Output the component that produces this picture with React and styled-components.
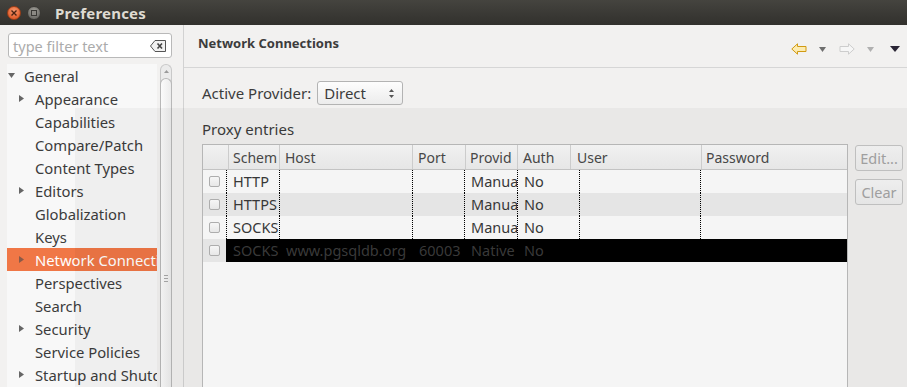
import React from "react";
import styled, { createGlobalStyle } from "styled-components";

const GlobalStyle = createGlobalStyle`
    html, body {
        margin: 0;
        padding: 0;
        background: #f2f1f0;
    }
`;

const Window = styled.div`
    position: relative;
    width: 907px;
    height: 387px;
    display: flex;
    flex-direction: column;
    overflow: hidden;
    background: #f2f1f0;
    font-family: "Noto Sans", "Open Sans", sans-serif;
    color: #3c3c3c;
`;

const TitleBar = styled.div`
    height: 25px;
    flex: none;
    display: flex;
    align-items: center;
    padding-left: 7px;
    background: linear-gradient(#45443f, #393834 60%, #32312d);
`;

const WindowButton = styled.div`
    width: 14px;
    height: 14px;
    border-radius: 50%;
    margin-right: 6px;
    display: flex;
    align-items: center;
    justify-content: center;
    box-sizing: border-box;
    ${props => props.close ? `
        background: radial-gradient(circle at 50% 35%, #f79a70, #e3602f 70%);
        border: 1px solid #9a3d17;
    ` : `
        background: radial-gradient(circle at 50% 35%, #a5a39c, #6f6e69 70%);
        border: 1px solid #3a3935;
    `}
`;

const TitleText = styled.div`
    margin-left: 8px;
    color: #dfdbd2;
    font-weight: bold;
    font-size: 15px;
    letter-spacing: 0.2px;
`;

const Body = styled.div`
    flex: 1;
    display: flex;
    min-height: 0;
`;

const LeftPanel = styled.div`
    width: 184px;
    flex: none;
    box-sizing: border-box;
    border-right: 1px solid #d2d2d2;
    padding: 8px 0 0 7px;
    display: flex;
    flex-direction: column;
`;

const FilterBox = styled.div`
    margin-left: 1px;
    width: 164px;
    height: 25px;
    box-sizing: border-box;
    border: 1px solid #b9b9b9;
    border-radius: 3px;
    background: #ffffff;
    display: flex;
    align-items: center;
    justify-content: space-between;
    padding: 0 5px 0 4px;
`;

const Placeholder = styled.span`
    color: #ababab;
    font-size: 14.5px;
`;

const TreeArea = styled.div`
    margin-top: 6px;
    flex: 1;
    display: flex;
    min-height: 0;
`;

const TreeList = styled.div`
    width: 150px;
    margin-right: 3px;
    background: #f8f8f8;
`;

const TreeRow = styled.div`
    height: 23px;
    display: flex;
    align-items: center;
    padding-left: ${props => props.depth * 11}px;
    white-space: nowrap;
    overflow: hidden;
    font-size: 14.8px;
    background: ${props => props.selected ? "#f07746" : "transparent"};
    color: ${props => props.selected ? "#ffffff" : "#3c3c3c"};
`;

const ArrowBox = styled.div`
    width: 17px;
    flex: none;
    display: flex;
    align-items: center;
    padding-left: 1px;
    box-sizing: border-box;
`;

const Scrollbar = styled.div`
    width: 12px;
    flex: none;
    box-sizing: border-box;
    border: 1px solid #c9c9c9;
    border-bottom: none;
    border-radius: 6px 6px 0 0;
    background: #ebebeb;
    display: flex;
    flex-direction: column;
    align-items: center;
    padding-top: 5px;
`;

const ScrollThumb = styled.div`
    margin-top: 5px;
    width: 12px;
    flex: 1;
    box-sizing: border-box;
    border: 1px solid #b8b8b8;
    border-bottom: none;
    border-radius: 6px 6px 0 0;
    background: linear-gradient(to right, #fbfbfb, #ececec);
    display: flex;
    justify-content: center;
`;

const Grip = styled.div`
    margin-top: 196px;
    width: 4px;
    height: 7px;
    background: repeating-linear-gradient(#a8a8a8 0 1px, transparent 1px 3px);
`;

const RightPanel = styled.div`
    flex: 1;
    display: flex;
    flex-direction: column;
    min-width: 0;
`;

const PageHeader = styled.div`
    height: 43px;
    flex: none;
    box-sizing: border-box;
    border-bottom: 1px solid #d6d6d6;
    display: flex;
    align-items: flex-start;
    justify-content: space-between;
    padding: 0 7px 0 14px;
`;

const PageTitle = styled.div`
    margin-top: 9px;
    line-height: 18px;
    font-weight: bold;
    font-size: 13px;
    color: #3c3c3c;
`;

const NavIcons = styled.div`
    margin-top: 17px;
    height: 14px;
    display: flex;
    align-items: center;
`;

const NavIcon = styled.div`
    display: flex;
    align-items: center;
    margin-left: ${props => props.gap || 0}px;
`;

const Content = styled.div`
    flex: 1;
    display: flex;
    flex-direction: column;
    padding: 13px 4px 0 18px;
    min-height: 0;
`;

const ProviderRow = styled.div`
    display: flex;
    align-items: center;
    gap: 6px;
    font-size: 15px;
`;

const Combo = styled.div`
    width: 86px;
    height: 24px;
    box-sizing: border-box;
    border: 1px solid #b3b3b3;
    border-radius: 3px;
    background: linear-gradient(#fdfdfd, #ececec);
    display: flex;
    align-items: center;
    justify-content: space-between;
    padding: 0 8px 0 6px;
    font-size: 15px;
`;

const SectionLabel = styled.div`
    margin-top: 15px;
    margin-bottom: 6px;
    line-height: 18px;
    font-size: 15px;
`;

const TableRow = styled.div`
    flex: 1;
    display: flex;
    align-items: flex-start;
    gap: 7px;
    min-height: 0;
`;

const Table = styled.div`
    width: 646px;
    align-self: stretch;
    box-sizing: border-box;
    border: 1px solid #bdbdbd;
    border-bottom: none;
    background: #fefefe;
    display: flex;
    flex-direction: column;
`;

const HeaderRow = styled.div`
    display: grid;
    grid-template-columns: 25px 51px 133px 53px 52px 53px 131px 146px;
    height: 24px;
    border-bottom: 1px solid #cbcbcb;
    background: linear-gradient(#fafafa, #efefef);
`;

const HeaderCell = styled.div`
    border-left: ${props => props.first ? "none" : "1px solid #d4d4d4"};
    padding-left: ${props => props.pad || 4}px;
    font-size: 14px;
    line-height: 25px;
    white-space: nowrap;
    overflow: hidden;
    color: #4a4a4a;
`;

const DataRow = styled.div`
    display: grid;
    grid-template-columns: 23px 53px 133px 52px 53px 62px 121px 147px;
    height: 23px;
    background: ${props => props.selected ? "#000000" : props.stripe ? "#eeeeee" : "transparent"};
    color: ${props => props.selected ? "#3c3c3c" : "#3a3a3a"};
`;

const CheckCell = styled.div`
    display: flex;
    align-items: center;
    justify-content: center;
    background: ${props => props.selected ? "#eeeeee" : "transparent"};
`;

const Checkbox = styled.div`
    width: 11px;
    height: 11px;
    box-sizing: border-box;
    border: 1px solid #b4b4b4;
    border-radius: 2px;
    background: linear-gradient(#ffffff, #f0f0f0);
`;

const DataCell = styled.div`
    border-left: 1px dotted #000000;
    padding-left: 6px;
    font-size: 14.5px;
    line-height: 23px;
    white-space: nowrap;
    overflow: hidden;
`;

const ButtonColumn = styled.div`
    margin-top: 1px;
    display: flex;
    flex-direction: column;
    gap: 8px;
`;

const SideButton = styled.div`
    width: 48px;
    height: 26px;
    box-sizing: border-box;
    border: 1px solid #c6c6c6;
    border-radius: 3px;
    background: linear-gradient(#f7f7f7, #eeeeee);
    color: #a5a5a5;
    font-size: 14.5px;
    display: flex;
    align-items: center;
    justify-content: center;
`;

const Shade = styled.div`
    position: absolute;
    left: 75px;
    top: 108px;
    right: 0;
    bottom: 0;
    background: rgba(0, 0, 0, 0.035);
    pointer-events: none;
`;

const Triangle = ({ dir, color = "#666666" }) => (
    dir === "down" ? (
        <svg width="7" height="5" viewBox="0 0 7 5">
            <polygon points="0,0 7,0 3.5,5" fill={color} />
        </svg>
    ) : (
        <svg width="5" height="7" viewBox="0 0 5 7">
            <polygon points="0,0 5,3.5 0,7" fill={color} />
        </svg>
    )
);

const treeItems = [
    { label: "General", depth: 0, arrow: "down" },
    { label: "Appearance", depth: 1, arrow: "right" },
    { label: "Capabilities", depth: 1 },
    { label: "Compare/Patch", depth: 1 },
    { label: "Content Types", depth: 1 },
    { label: "Editors", depth: 1, arrow: "right" },
    { label: "Globalization", depth: 1 },
    { label: "Keys", depth: 1 },
    { label: "Network Connections", depth: 1, arrow: "right", selected: true },
    { label: "Perspectives", depth: 1 },
    { label: "Search", depth: 1 },
    { label: "Security", depth: 1, arrow: "right" },
    { label: "Service Policies", depth: 1 },
    { label: "Startup and Shutdown", depth: 1, arrow: "right" },
];

const headers = [
    { label: "", pad: 0 },
    { label: "Schem", pad: 4 },
    { label: "Host", pad: 5 },
    { label: "Port", pad: 5 },
    { label: "Provid", pad: 4 },
    { label: "Auth", pad: 5 },
    { label: "User", pad: 6 },
    { label: "Password", pad: 4 },
];

const entries = [
    ["HTTP", "", "", "Manual", "No", "", ""],
    ["HTTPS", "", "", "Manual", "No", "", ""],
    ["SOCKS", "", "", "Manual", "No", "", ""],
    ["SOCKS", "www.pgsqldb.org", "60003", "Native", "No", "", ""],
];

export default function App() {
    return (
        <>
            <GlobalStyle />
            <Window>
                <TitleBar>
                    <WindowButton close>
                        <svg width="6" height="6" viewBox="0 0 6 6">
                            <path d="M0.5 0.5 L5.5 5.5 M5.5 0.5 L0.5 5.5" stroke="#4a2212" strokeWidth="1.4" />
                        </svg>
                    </WindowButton>
                    <WindowButton>
                        <svg width="6" height="6" viewBox="0 0 6 6">
                            <rect x="0.5" y="0.5" width="5" height="5" fill="#8c8a84" stroke="#3a3935" />
                        </svg>
                    </WindowButton>
                    <TitleText>Preferences</TitleText>
                </TitleBar>
                <Body>
                    <LeftPanel>
                        <FilterBox>
                            <Placeholder>type filter text</Placeholder>
                            <svg width="16" height="12" viewBox="0 0 16 12">
                                <path d="M5 0.5 H15.5 V11.5 H5 L0.5 6 Z" fill="#f2f2f2" stroke="#555555" />
                                <path d="M7.5 3.5 L12 8.5 M12 3.5 L7.5 8.5" stroke="#444444" strokeWidth="1.6" />
                            </svg>
                        </FilterBox>
                        <TreeArea>
                            <TreeList>
                                {treeItems.map(item => (
                                    <TreeRow key={item.label} depth={item.depth} selected={item.selected}>
                                        <ArrowBox>
                                            {item.arrow && <Triangle dir={item.arrow} color={item.selected ? "#8a5a48" : "#666666"} />}
                                        </ArrowBox>
                                        {item.label}
                                    </TreeRow>
                                ))}
                            </TreeList>
                            <Scrollbar>
                                <svg width="5" height="3" viewBox="0 0 5 3">
                                    <polygon points="0,3 5,3 2.5,0" fill="#9a9a9a" />
                                </svg>
                                <ScrollThumb>
                                    <Grip />
                                </ScrollThumb>
                            </Scrollbar>
                        </TreeArea>
                    </LeftPanel>
                    <RightPanel>
                        <PageHeader>
                            <PageTitle>Network Connections</PageTitle>
                            <NavIcons>
                                <NavIcon>
                                    <svg width="16" height="12" viewBox="0 0 16 12">
                                        <polygon points="0.8,6 6.5,0.8 6.5,3.5 15,3.5 15,8.5 6.5,8.5 6.5,11.2" fill="#fcebb0" stroke="#d19a12" strokeLinejoin="round" />
                                    </svg>
                                </NavIcon>
                                <NavIcon gap={12}>
                                    <Triangle dir="down" color="#6e6e6e" />
                                </NavIcon>
                                <NavIcon gap={13}>
                                    <svg width="16" height="12" viewBox="0 0 16 12">
                                        <polygon points="15.2,6 9.5,0.8 9.5,3.5 1,3.5 1,8.5 9.5,8.5 9.5,11.2" fill="#f6f6f6" stroke="#cdcdcd" strokeLinejoin="round" />
                                    </svg>
                                </NavIcon>
                                <NavIcon gap={12}>
                                    <Triangle dir="down" color="#b0b0b0" />
                                </NavIcon>
                                <NavIcon gap={16}>
                                    <svg width="10" height="6" viewBox="0 0 10 6">
                                        <polygon points="0,0 10,0 5,6" fill="#2a2535" />
                                    </svg>
                                </NavIcon>
                            </NavIcons>
                        </PageHeader>
                        <Content>
                            <ProviderRow>
                                <span>Active Provider:</span>
                                <Combo>
                                    <span>Direct</span>
                                    <svg width="5" height="9" viewBox="0 0 5 9">
                                        <polygon points="0,3 5,3 2.5,0" fill="#555555" />
                                        <polygon points="0,6 5,6 2.5,9" fill="#555555" />
                                    </svg>
                                </Combo>
                            </ProviderRow>
                            <SectionLabel>Proxy entries</SectionLabel>
                            <TableRow>
                                <Table>
                                    <HeaderRow>
                                        {headers.map((h, i) => (
                                            <HeaderCell key={i} first={i === 0} pad={h.pad}>{h.label}</HeaderCell>
                                        ))}
                                    </HeaderRow>
                                    {entries.map((row, i) => {
                                        const selected = i === 3;
                                        return (
                                            <DataRow key={i} stripe={i % 2 === 1} selected={selected}>
                                                <CheckCell selected={selected}>
                                                    <Checkbox />
                                                </CheckCell>
                                                {row.map((value, j) => (
                                                    <DataCell key={j}>{value}</DataCell>
                                                ))}
                                            </DataRow>
                                        );
                                    })}
                                </Table>
                                <ButtonColumn>
                                    <SideButton>Edit...</SideButton>
                                    <SideButton>Clear</SideButton>
                                </ButtonColumn>
                            </TableRow>
                        </Content>
                    </RightPanel>
                </Body>
                <Shade />
            </Window>
        </>
    );
}
